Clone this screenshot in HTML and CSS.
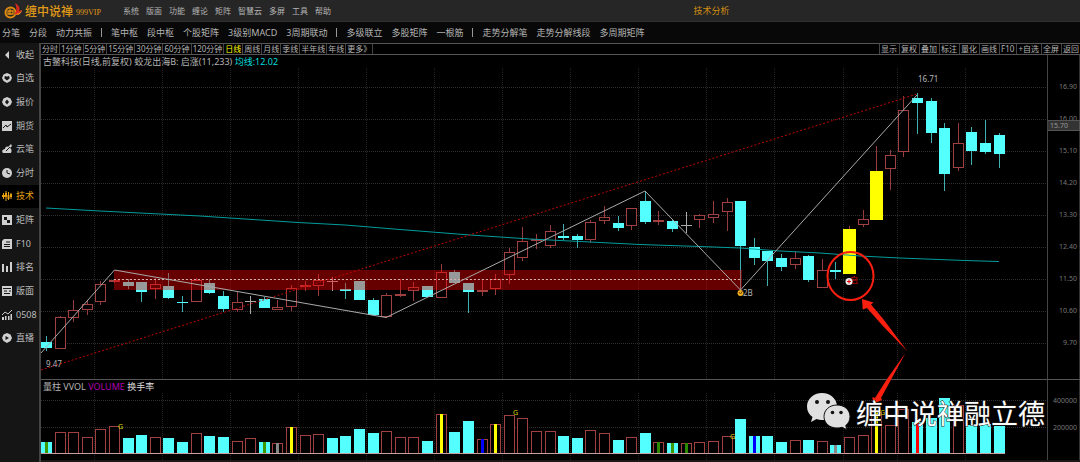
FILE: index.html
```html
<!DOCTYPE html>
<html lang="zh-CN">
<head>
  <meta charset="UTF-8">
  <meta name="viewport" content="width=device-width, initial-scale=1.0">
  <title>技术分析</title>
  <link rel="stylesheet" href="styles.css">
</head>
<body>

  <header class="topbar">
    <div class="brand">
      <svg class="logo" viewBox="0 0 20 18">
        <circle cx="7.500" cy="10.500" r="5" fill="none" stroke="#e08c10" stroke-width="2"/>
        <path d="M5 9h5v3H5zM7 7v6" fill="none" stroke="#e08c10" stroke-width="1.300"/>
        <path d="M11 12c3-2 3-6 1-11 5 3 5 6 4 8l3-1c-1 4-4 6-8 4z" fill="#d8281c"/>
        <path d="M12 12c3 0 5-1 7-4-1 4-4 6-7 4z" fill="#f0a020"/>
      </svg>
      <span class="brand-name">缠中说禅</span>
      <span class="brand-vip">999VIP</span>
    </div>
    <nav class="menu">
      <button>系统</button>
      <button>版面</button>
      <button>功能</button>
      <button>缠论</button>
      <button>矩阵</button>
      <button>智慧云</button>
      <button>多屏</button>
      <button>工具</button>
      <button>帮助</button>
    </nav>
    <div class="page-title">技术分析</div>
  </header>

  <div class="toolbar">
    <button>分笔</button>
    <button>分段</button>
    <button>动力共振</button>
    <i class="sep"></i>
    <button>笔中枢</button>
    <button>段中枢</button>
    <button>个股矩阵</button>
    <button>3级别MACD</button>
    <button>3周期联动</button>
    <i class="sep"></i>
    <button>多级联立</button>
    <button>多股矩阵</button>
    <button>一根筋</button>
    <i class="sep"></i>
    <button>走势分解笔</button>
    <button>走势分解线段</button>
    <button>多周期矩阵</button>
  </div>

  <div class="workspace">
    <aside class="sidebar">
      <button><svg viewBox="0 0 10 10"><path d="M7 1v8L3 5z"/></svg>收起</button>
      <button><svg viewBox="0 0 10 10"><path fill-rule="evenodd" d="M5 0l3.500 1.500L10 5 8.500 8 5 10 1.500 8 0 5l1.500-3.500zM2.500 3.500v2L5 7.500l2.500-2v-2L6 3 5 4 4 3z"/></svg>自选</button>
      <button><svg viewBox="0 0 10 10"><path fill-rule="evenodd" d="M5 0l3.500 1.500L10 5 8.500 8 5 10 1.500 8 0 5l1.500-3.500zM5 2.500L3 5l2 2.500L7 5z"/><path d="M5 3v4"/></svg>报价</button>
      <button><svg viewBox="0 0 10 10"><path d="M0 0h10v10H0z"/><path d="M1 7l3-3 1 2 4-3" class="cut"/></svg>期货</button>
      <button><svg viewBox="0 0 10 10"><path d="M1 9C-1 7 1 5 3 5c0-2 2-3 3-2l3-3 1 2-2 2c2 1 2 5 0 5z"/><path d="M4 7l4-4" class="cut"/></svg>云笔</button>
      <button><svg viewBox="0 0 10 10"><circle cx="5" cy="5" r="5"/><path d="M5 2v3l3 1" class="cut"/></svg>分时</button>
      <button class="active"><svg viewBox="0 0 10 10"><path d="M1 2h1v6H1zM0 4h3v2H0zM3.500 0h1v10h-1zM3 2h2v4H3zM6 1h1v8H6zM5.500 4h2v4h-2zM8.500 2h1v6h-1zM8 3h2v3H8z"/></svg>技术</button>
      <button><svg viewBox="0 0 10 10"><path d="M0 0h10v10H0z"/><path d="M2 2h3v3h3v3H5V5H2z" fill="#151515"/></svg>矩阵</button>
      <button><svg viewBox="0 0 10 10"><path d="M2 0h8v10H0V2z"/><path d="M4 3h4M2 5.500h6M2 7.500h6" class="cut"/></svg>F10</button>
      <button><svg viewBox="0 0 10 10"><path d="M0 2h2v8H0zM4 4h2v6H4zM8 0h2v10H8z"/></svg>排名</button>
      <button><svg viewBox="0 0 10 10"><path d="M0 0h10v10H0z"/><path d="M1 2.500h8M2 5h3M2 7.500h6M7 5h2" class="cut"/></svg>版面</button>
      <button><svg viewBox="0 0 10 10"><path d="M0 7h2v3H0zM3 6h1.500v4H3zM6 6h1.500v4H6zM8.500 4H10v6H8.500z"/><path d="M0 5l3-3 3 2 4-4" fill="none" stroke="#ccc"/></svg>0508</button>
      <button><svg viewBox="0 0 10 10"><path fill-rule="evenodd" d="M5 0l3.500 1.500L10 5 8.500 8 5 10 1.500 8 0 5l1.500-3.500zM3.500 3v4L7 5z"/></svg>直播</button>
    </aside>

    <main class="main">
      <div class="tabs">
        <div class="periods">
          <button>分时</button>
          <button>1分钟</button>
          <button>5分钟</button>
          <button>15分钟</button>
          <button>30分钟</button>
          <button>60分钟</button>
          <button>120分钟</button>
          <button class="active">日线</button>
          <button>周线</button>
          <button>月线</button>
          <button>季线</button>
          <button>半年线</button>
          <button>年线</button>
          <button>更多》</button>
        </div>
        <div class="actions">
          <button>显示</button>
          <button>复权</button>
          <button>叠加</button>
          <button>标注</button>
          <button>量化</button>
          <button>画线</button>
          <button>F10</button>
          <button>+自选</button>
          <button>全屏</button>
          <button>返回</button>
        </div>
      </div>

      <div class="charts">
        <section class="panel">
          <div class="plot">
            <div class="caption">古鳖科技(日线,前复权) 蛟龙出海B: 启涨(11,233) <span class="ma">均线:12.02</span></div>
            <svg id="price" viewBox="41 68 1006 311"></svg>
          </div>
          <div class="axis price-axis">
            <span>16.90</span>
            <span>16.00</span>
            <span>15.10</span>
            <span>14.20</span>
            <span>13.30</span>
            <span>12.40</span>
            <span>11.50</span>
            <span>10.60</span>
            <span>9.70</span>
            <b class="cursor-price">15.70</b>
          </div>
        </section>
        <section class="panel volume-panel">
          <div class="plot">
            <div class="caption">量柱 VVOL <span class="vol">VOLUME</span> <span class="turnover">换手率</span></div>
            <svg id="volume" viewBox="41 393 1006 67"></svg>
          </div>
          <div class="axis volume-axis">
            <span>400000</span>
            <span>200000</span>
          </div>
        </section>

        <!-- hand-drawn notes and watermark over both panels -->
        <svg class="notes" viewBox="41 55 1039 405">
          <ellipse cx="850.500" cy="276" rx="23" ry="24" fill="none" stroke="#fb1f10" stroke-width="2"/>
          <path fill="#fb1f10" d="M862 299l11.500 3.500-2.500 2 13 15.500 23.500 31.500L882 325l-15-17-4.300 1.500z"/>
          <path fill="#fb1f10" d="M905.500 353L893 376l-12 22 1 2-9 4-.5-7 2.500 1 12-19z"/>
          <g fill="#e0e0e0">
            <path d="M822 393c-8.500 0-15 6-15 13.500 0 4.500 2 8 5.500 10.500L811 422l5.500-3c2 .8 4 1 6.500 1 8 0 14-6 14-13.500S830.500 393 822 393z"/>
            <path stroke="#111" stroke-width="1" d="M837 405c-7.500 0-13 5-13 11.500S829.500 428 837 428c2 0 3.500-.3 5-.8l5 2.500-1.300-4.200c2.800-2.200 4.300-5.200 4.300-9C850 410 844.500 405 837 405z"/>
          </g>
          <g fill="#111">
            <circle cx="817" cy="402" r="2"/><circle cx="828" cy="402" r="2"/>
            <circle cx="832.500" cy="412.500" r="1.800"/><circle cx="841" cy="412.500" r="1.800"/>
          </g>
          <text class="watermark" x="856" y="424">缠中说禅融立德</text>
        </svg>
      </div>
    </main>
  </div>

  <script src="chart.js"></script>
</body>
</html>
```
FILE: styles.css
```css
* {
  box-sizing: border-box;
}

body {
  margin: 0;
  background-color: #000;
  color: #b4b4b4;
  font-family: "Noto Sans", "Noto Sans CJK SC", sans-serif;
  font-size: 8px;
  line-height: 10px;
}

button {
  padding: 0;
  border: none;
  background: none;
  color: inherit;
  font: inherit;
  white-space: nowrap;
  cursor: pointer;
}

svg {
  display: block;
}

.topbar {
  display: flex;
  align-items: center;
  height: 22px;
  background-color: #262626;
  border-bottom: 1px solid #303030;
}

.brand {
  display: flex;
  align-items: center;
  width: 123px;
  padding-left: 3px;
  color: #e09a18;
}

.logo {
  width: 20px;
  height: 18px;
}

.brand-name {
  margin-left: 2px;
  padding-top: 2px;
  font-size: 12px;
  font-weight: 500;
  line-height: 16px;
}

.brand-vip {
  margin-left: 3px;
  padding-top: 5px;
  font-family: "Liberation Serif", serif;
}

.menu {
  display: flex;
  gap: 7px;
}

.page-title {
  flex: 1;
  padding-left: 12px;
  color: #d08c10;
  font-size: 9px;
  text-align: center;
}

.toolbar {
  display: flex;
  align-items: center;
  gap: 9px;
  height: 21px;
  padding-left: 2px;
  background-color: #080808;
  font-size: 9px;
}

.sep {
  width: 1px;
  height: 9px;
  background-color: #999;
}

.workspace {
  display: flex;
}

.sidebar {
  display: grid;
  flex: none;
  grid-auto-rows: 1fr;
  align-self: stretch;
  width: 41px;
  padding-bottom: 112px;
  background-color: #151515;
  border-right: 2px solid #444;
  font-size: 9px;
}

.sidebar button {
  display: flex;
  align-items: center;
  gap: 4px;
  padding-left: 2px;
  color: #bbb;
}

.sidebar svg {
  flex: none;
  width: 10px;
  height: 10px;
  fill: #d0d0d0;
}

.sidebar .cut {
  fill: none;
  stroke: #151515;
}

.sidebar .active {
  background-color: #000;
  color: #e8a010;
}

.sidebar .active svg {
  fill: #e8a010;
}

.main {
  flex: 1;
  min-width: 0;
}

.tabs {
  display: flex;
  justify-content: space-between;
  height: 12px;
  border-top: 1px solid #555;
  border-bottom: 1px solid #555;
}

.periods,
.actions {
  display: flex;
}

.tabs button {
  padding: 0 1px;
  border-right: 1px solid #444;
}

.actions {
  gap: 1px;
}

.actions button {
  border-right: none;
  border-left: 1px solid #444;
}

.tabs .active {
  color: #ff0;
}

.charts {
  position: relative;
  border-bottom: 2px solid #1c1818;
}

.panel {
  display: flex;
}

.volume-panel {
  border-top: 1px solid #555;
}

.plot {
  flex: 1;
  min-width: 0;
}

.plot svg {
  width: 100%;
}

.caption {
  height: 13px;
  padding-left: 2px;
  font-size: 9px;
  line-height: 13px;
  white-space: nowrap;
}

.ma {
  color: #00dcdc;
}

.vol {
  color: #b000b0;
}

.turnover {
  color: #ddd;
}

.axis {
  position: relative;
  display: flex;
  flex: none;
  flex-direction: column;
  width: 33px;
  padding-right: 2px;
  border-left: 1px solid #444;
  border-right: 1px solid #333;
  color: #777;
  font-size: 7px;
  text-align: right;
}

.price-axis {
  padding-top: 16px;
  line-height: 32px;
}

.volume-axis {
  padding-top: 7px;
  line-height: 27px;
}

.cursor-price {
  position: absolute;
  top: 65px;
  left: 0;
  width: 32px;
  padding-left: 2px;
  background-color: #333;
  border: 1px solid #555;
  border-left: none;
  color: #999;
  font-weight: normal;
  line-height: 9px;
  text-align: left;
}

.notes {
  position: absolute;
  top: 0;
  left: 0;
  width: 100%;
}

.watermark {
  fill: #fff;
  font-size: 27px;
  paint-order: stroke;
  stroke: #222;
  stroke-width: 1px;
}

/* chart marks */
.grid {
  fill: none;
  stroke: #303030;
  stroke-dasharray: 1 1;
  shape-rendering: crispEdges;
}

.grid-v {
  stroke: #222;
}

.up {
  fill: #000;
  stroke: #a04040;
  shape-rendering: crispEdges;
}

.down {
  fill: #54ffff;
  stroke: none;
  shape-rendering: crispEdges;
}

.wick-up,
.wick-down,
.wick-flat,
.wick-hot {
  stroke: #963c3c;
  shape-rendering: crispEdges;
}

.wick-down {
  stroke: #3fb0b0;
}

.wick-flat {
  stroke: #aaa;
}

.hot {
  fill: #ff0;
  shape-rendering: crispEdges;
}

.pivot {
  fill: #f00;
  fill-opacity: 0.4;
  shape-rendering: crispEdges;
}

.pivot-mid {
  stroke: #d8b0b0;
  stroke-dasharray: 2 2;
}

.average {
  fill: none;
  stroke: #009c9c;
}

.stroke-line {
  fill: none;
  stroke: #aaa;
}

.trend {
  stroke: #c00000;
  stroke-dasharray: 2 2;
}

.base {
  stroke: #c8a0a0;
  shape-rendering: crispEdges;
}

.mark {
  fill: #b4b4b4;
  font-size: 8px;
}

.mark-g {
  fill: #d8d800;
  font-size: 7px;
}

.mark-red {
  fill: #e00000;
  font-size: 8px;
}
```
FILE: chart.js
```javascript
// kind, body top, body bottom, high, low  (u = up, d = down, f = flat, h = highlighted)
const candles = [
  ['d', 342, 348, 336, 351], ['u', 317, 349, 316, 349], ['u', 310, 318, 300, 322], ['u', 304, 310, 300, 315],
  ['u', 284, 302, 281, 305], ['u', 280, 282, 279, 283], ['d', 282, 286, 279, 289], ['d', 282, 292, 282, 302],
  ['u', 284, 289, 278, 299], ['d', 286, 298, 273, 299], ['d', 302, 303, 296, 312], ['u', 280, 302, 278, 302],
  ['d', 283, 293, 279, 294], ['d', 296, 309, 291, 312], ['u', 302, 310, 292, 312], ['f', 301, 302, 296, 314],
  ['d', 299, 308, 297, 308], ['u', 307, 310, 300, 310], ['u', 288, 307, 285, 311], ['u', 285, 287, 281, 291],
  ['u', 280, 286, 274, 296], ['f', 281, 282, 277, 291], ['d', 289, 291, 283, 299], ['d', 281, 300, 281, 300],
  ['d', 300, 315, 298, 315], ['u', 295, 317, 293, 318], ['u', 294, 295, 279, 297], ['u', 287, 291, 282, 301],
  ['d', 286, 297, 286, 297], ['u', 272, 298, 264, 298], ['d', 272, 283, 270, 283], ['d', 283, 292, 283, 313],
  ['u', 290, 291, 279, 296], ['u', 279, 289, 274, 295], ['u', 252, 275, 248, 284], ['u', 241, 258, 227, 261],
  ['u', 239, 240, 234, 249], ['u', 231, 246, 225, 248], ['d', 236, 238, 224, 240], ['d', 236, 240, 234, 248],
  ['u', 222, 240, 220, 243], ['u', 217, 221, 206, 224], ['d', 223, 228, 216, 231], ['u', 208, 226, 208, 230],
  ['d', 201, 222, 191, 224], ['u', 220, 221, 211, 225], ['d', 221, 229, 219, 232], ['f', 225, 226, 212, 233],
  ['u', 215, 220, 214, 228], ['u', 214, 218, 201, 223], ['u', 202, 212, 198, 231], ['d', 201, 246, 201, 290],
  ['d', 247, 258, 238, 265], ['d', 251, 261, 251, 286], ['d', 258, 267, 254, 271], ['u', 258, 265, 251, 269],
  ['d', 256, 280, 255, 282], ['u', 270, 288, 259, 288], ['d', 270, 272, 262, 279], ['h', 229, 274, 226, 274],
  ['u', 219, 225, 210, 227], ['h', 171, 220, 146, 220], ['u', 155, 169, 150, 190], ['u', 110, 152, 96, 157],
  ['d', 98, 103, 93, 134], ['d', 101, 133, 98, 143], ['d', 128, 174, 123, 191], ['u', 143, 168, 123, 171],
  ['d', 132, 151, 127, 165], ['d', 143, 152, 120, 154], ['d', 135, 154, 133, 168]
];

// top of each volume bar
const volumes = [
  442, 432, 432, 437, 429, 426, 438, 435, 437, 438, 442, 433, 436, 437, 441, 438, 442, 443,
  427, 435, 434, 438, 436, 429, 433, 431, 437, 437, 441, 414, 432, 421, 439, 424, 415, 418,
  431, 431, 436, 438, 430, 433, 440, 437, 433, 442, 443, 443, 442, 441, 436, 419, 436, 436,
  442, 440, 440, 441, 445, 437, 435, 412, 425, 409, 422, 418, 398, 405, 425, 424, 426
];

const volumeDown = [0, 6, 7, 9, 10, 12, 13, 16, 21, 22, 23, 24, 28, 30, 31, 38, 39, 42, 44, 46, 51, 52, 53, 54, 56, 58, 64, 65, 66, 68, 69, 70];

const stripes = {
  0: '#3c9a00', 16: '#3c9a00', 17: '#888', 18: '#ff0', 29: '#ff0', 32: '#00f', 33: '#ff0',
  45: '#2c8a00', 46: '#3c9a00', 47: '#2c8a00', 52: '#00f', 58: '#888', 61: '#ff0', 64: '#f00'
};

const gridX = [94, 162, 230, 298, 366, 434, 502, 570, 638, 706, 774, 843, 897, 965];
const gridY = [87, 119, 151, 183, 215, 247, 279, 311, 343];

function xOf(i) {
  return Math.round(46 + i * 13.61);
}

function line(cls, x1, y1, x2, y2) {
  return `<line class="${cls}" x1="${x1}" y1="${y1}" x2="${x2}" y2="${y2}"/>`;
}

function rect(cls, x, y, w, h) {
  return `<rect class="${cls}" x="${x}" y="${y}" width="${w}" height="${h}"/>`;
}

function candle([kind, top, bottom, high, low], i) {
  const x = xOf(i);
  const mid = x + 0.5;
  const wick = { u: 'wick-up', d: 'wick-down', f: 'wick-flat', h: 'wick-hot' }[kind];
  let out = line(wick, mid, high, mid, low);
  if (kind === 'f') {
    out += line(wick, x - 5, top + 0.5, x + 6, top + 0.5);
  } else if (kind === 'u') {
    out += rect('up', x - 4.5, top + 0.5, 10, Math.max(bottom - top - 1, 1));
  } else if (kind === 'd') {
    out += rect('down', x - 5, top, 11, bottom - top);
  } else {
    out += rect('hot', x - 6, top, 13, bottom - top);
  }
  return out;
}

function drawPrice() {
  let out = '';
  gridX.forEach(x => out += line('grid grid-v', x + 0.5, 68, x + 0.5, 379));
  gridY.forEach(y => out += line('grid', 41, y + 0.5, 1047, y + 0.5));
  out += candles.map(candle).join('');
  out += rect('pivot', 114, 270, 628, 20);
  out += line('pivot-mid', 114, 279.5, 742, 279.5);
  out += '<polyline class="average" points="46,208 100,211 150,213.5 200,216 230,218 298,222.5 345,225 400,229.5 470,235 530,239 600,242.5 640,244.5 700,246.5 740,248 780,251 820,253 860,256 900,258 965,260.5 999,261.5"/>';
  out += line('trend', 41, 370, 917, 94);
  out += '<polyline class="stroke-line" points="41,353 114.5,270 386,317.5 645,191 740.5,290 917,95"/>';
  // buy point markers
  out += '<circle cx="740.5" cy="293" r="3" fill="#f0b020"/><path d="M739 292l1.500 2 2-3" fill="none" stroke="#704000"/>';
  out += '<text class="mark" x="743" y="296">2B</text>';
  out += '<text class="mark-red" x="850" y="283">启</text>';
  out += '<circle cx="849" cy="281.5" r="3.5" fill="#eee"/><path d="M847 281.500h4M849 279.500v4" stroke="#e00000"/>';
  out += '<text class="mark" x="918" y="82">16.71</text>';
  out += '<text class="mark" x="46" y="367">9.47</text>';
  document.getElementById('price').innerHTML = out;
}

function drawVolume() {
  let out = '';
  gridX.forEach(x => out += line('grid grid-v', x + 0.5, 393, x + 0.5, 460));
  [400, 427].forEach(y => out += line('grid', 41, y + 0.5, 1047, y + 0.5));
  volumes.forEach((top, i) => {
    const x = xOf(i);
    if (volumeDown.includes(i)) {
      out += rect('down', x - 5, top, 11, 454 - top);
    } else {
      out += rect('up', x - 4.5, top + 0.5, 10, 453 - top);
    }
    if (stripes[i]) {
      out += `<rect x="${x - 1}" y="${top}" width="3" height="${454 - top}" fill="${stripes[i]}"/>`;
    }
  });
  out += line('base', 41, 453.5, 1005, 453.5);
  [[118, 429], [513, 415], [730, 439], [880, 415]].forEach(([x, y]) => {
    out += `<text class="mark-g" x="${x}" y="${y}">G</text>`;
  });
  document.getElementById('volume').innerHTML = out;
}

drawPrice();
drawVolume();
```
